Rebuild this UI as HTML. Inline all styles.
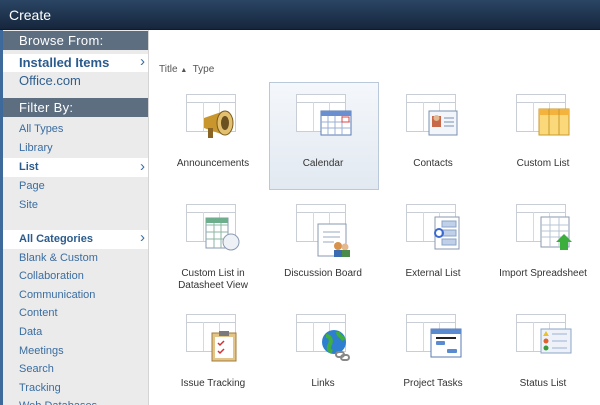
<!DOCTYPE html>
<html><head><meta charset="utf-8"><style>
*{margin:0;padding:0;box-sizing:border-box}
body{width:600px;height:405px;overflow:hidden;font-family:"Liberation Sans","DejaVu Sans",sans-serif;background:#fff;position:relative}
#top{position:absolute;left:0;top:0;width:600px;height:30px;background:linear-gradient(#2a4564,#16263c);color:#fff;font-size:14px;line-height:30px;padding-left:9px;border-bottom:1px solid #0f1b2b}
#side{position:absolute;left:0;top:30px;width:149px;height:375px;overflow:hidden;background:#ebebeb;border-left:3px solid #3d6a9a;border-right:1px solid #d4d4d4}
.h{height:19px;background:#5d6e80;color:#fff;font-size:13px;line-height:19px;padding-left:16px;letter-spacing:.3px}
.i{height:19px;font-size:11px;color:#3a6da1;line-height:19px;padding-left:16px;position:relative}
.c .i{height:18.6px;line-height:18.6px}
.sel{background:#fff;font-weight:bold;color:#2b5b8c}
.sel:after{content:"›";position:absolute;right:3px;top:-1px;font-size:15px;font-weight:normal;color:#3a6da1}
.big{font-size:13px;height:18px;line-height:18px}
.t{position:absolute;width:110px;text-align:center;font-size:10px;color:#333}
.f{position:absolute;width:50px;height:38px;border:1px solid #c9ced6;background:#fff}
.f:before{content:"";position:absolute;left:0;right:0;top:7px;border-top:1px solid #c9ced6}
.f i{position:absolute;top:7px;bottom:0;border-left:1px solid #d6dae0}
.o{position:absolute}
</style></head><body>
<div id="top">Create</div>
<div id="side">
<div class="h" style="margin-top:1px">Browse From:</div>
<div style="height:4px"></div>
<div class="i sel big">Installed Items</div>
<div class="i big" style="color:#2f5f8f">Office.com</div>
<div style="height:8px"></div>
<div class="h">Filter By:</div>
<div style="height:3px"></div>
<div class="i">All Types</div>
<div class="i">Library</div>
<div class="i sel">List</div>
<div class="i">Page</div>
<div class="i">Site</div>
<div style="height:15px"></div>
<div class="c">
<div class="i sel">All Categories</div>
<div class="i">Blank &amp; Custom</div>
<div class="i">Collaboration</div>
<div class="i">Communication</div>
<div class="i">Content</div>
<div class="i">Data</div>
<div class="i">Meetings</div>
<div class="i">Search</div>
<div class="i">Tracking</div>
<div class="i">Web Databases</div>
</div>
</div>
<div style="position:absolute;left:159px;top:64px;font-size:10px;color:#555">Title <span style="font-size:7px">▲</span>&nbsp; Type</div>
<div style="position:absolute;left:269px;top:82px;width:110px;height:108px;background:linear-gradient(#f4f7fb,#e2e9f1);border:1px solid #b9c9da"></div>

<div class="f" style="left:186px;top:94px"><i style="left:16px"></i><i style="left:32px"></i></div>
<div class="f" style="left:296px;top:94px"><i style="left:16px"></i><i style="left:32px"></i></div>
<div class="f" style="left:406px;top:94px"><i style="left:16px"></i><i style="left:32px"></i></div>
<div class="f" style="left:516px;top:94px"><i style="left:16px"></i><i style="left:32px"></i></div>
<div class="f" style="left:186px;top:204px"><i style="left:16px"></i><i style="left:32px"></i></div>
<div class="f" style="left:296px;top:204px"><i style="left:16px"></i><i style="left:32px"></i></div>
<div class="f" style="left:406px;top:204px"><i style="left:16px"></i><i style="left:32px"></i></div>
<div class="f" style="left:516px;top:204px"><i style="left:16px"></i><i style="left:32px"></i></div>
<div class="f" style="left:186px;top:314px"><i style="left:16px"></i><i style="left:32px"></i></div>
<div class="f" style="left:296px;top:314px"><i style="left:16px"></i><i style="left:32px"></i></div>
<div class="f" style="left:406px;top:314px"><i style="left:16px"></i><i style="left:32px"></i></div>
<div class="f" style="left:516px;top:314px"><i style="left:16px"></i><i style="left:32px"></i></div>

<svg class="o" style="left:200px;top:108px" width="42" height="32"><path d="M4 10 L24 3 L24 27 L4 20Z" fill="#c9962e"/><ellipse cx="25" cy="15" rx="8" ry="12" fill="#e2c070" stroke="#7a5a1e"/><ellipse cx="25" cy="15" rx="4" ry="7" fill="#6b5020"/><rect x="8" y="20" width="5" height="10" fill="#8a6422"/></svg>
<svg class="o" style="left:320px;top:110px" width="32" height="26"><rect x="1" y="1" width="30" height="24" fill="#fff" stroke="#5a7bb5"/><rect x="1" y="1" width="30" height="5" fill="#6a8fd0"/><path d="M1 12H31M1 18H31M8 6V25M15 6V25M22 6V25" stroke="#9ab0d5" stroke-width="1"/><rect x="22" y="7" width="7" height="5" fill="none" stroke="#d44"/></svg>
<svg class="o" style="left:428px;top:110px" width="30" height="26"><rect x="1" y="1" width="28" height="24" fill="#f2f5fa" stroke="#7a8fb0"/><rect x="4" y="6" width="9" height="11" fill="#c8684a"/><circle cx="8.5" cy="8" r="3" fill="#e4b890"/><path d="M16 8H26M16 12H26M16 16H26" stroke="#7a8fb0"/></svg>
<svg class="o" style="left:538px;top:108px" width="32" height="28"><rect x="1" y="1" width="30" height="26" fill="#fbd87a" stroke="#c79a30"/><rect x="1" y="1" width="30" height="6" fill="#f3b33c"/><path d="M11 1V27M21 1V27" stroke="#c79a30"/></svg>
<svg class="o" style="left:200px;top:212px" width="44" height="40"><rect x="6" y="6" width="22" height="30" fill="#fff" stroke="#8a9ab0"/><path d="M6 13H28M6 20H28M6 27H28M14 6V36M21 6V36" stroke="#8bb6a0"/><rect x="6" y="6" width="22" height="5" fill="#6fae8c"/><circle cx="31" cy="30" r="8" fill="#eef2f7" stroke="#8a9ab0"/></svg>
<svg class="o" style="left:314px;top:220px" width="40" height="40"><rect x="4" y="4" width="28" height="32" fill="#fff" stroke="#8a9ab0"/><path d="M9 12H26M9 17H26M9 22H20" stroke="#9aa8bf"/><circle cx="24" cy="26" r="4" fill="#d9924a"/><rect x="20" y="30" width="9" height="7" fill="#3a6ab0"/><circle cx="31" cy="27" r="3.5" fill="#e4b890"/><rect x="28" y="30" width="8" height="7" fill="#4a8a4a"/></svg>
<svg class="o" style="left:434px;top:216px" width="26" height="34"><rect x="1" y="1" width="24" height="32" fill="#fff" stroke="#8a9ab0"/><rect x="8" y="5" width="14" height="6" fill="#c0d0e8" stroke="#8aa4c8"/><rect x="8" y="14" width="14" height="6" fill="#c0d0e8" stroke="#8aa4c8"/><rect x="8" y="23" width="14" height="6" fill="#c0d0e8" stroke="#8aa4c8"/><circle cx="5" cy="17" r="4" fill="none" stroke="#3a6ad0" stroke-width="2"/></svg>
<svg class="o" style="left:538px;top:216px" width="34" height="36"><rect x="3" y="1" width="28" height="30" fill="#fff" stroke="#8a9ab0"/><path d="M3 9H31M3 15H31M3 21H31M12 1V31M21 1V31" stroke="#b9c4d4"/><path d="M18 26 L26 18 L34 26 L30 26 L30 34 L22 34 L22 26Z" fill="#3cae3c"/></svg>
<svg class="o" style="left:210px;top:330px" width="30" height="32"><rect x="2" y="3" width="24" height="28" fill="#e3c58a" stroke="#a07c3a"/><rect x="5" y="7" width="18" height="21" fill="#fff"/><rect x="9" y="1" width="10" height="5" fill="#7a7a7a"/><path d="M8 13l2 2 4-4M8 21l2 2 4-4" stroke="#c33" stroke-width="1.5" fill="none"/></svg>
<svg class="o" style="left:320px;top:328px" width="32" height="34"><circle cx="14" cy="14" r="12" fill="#2f7fd0"/><path d="M6 8c4 0 6 4 4 8s-2 6 2 8M18 4c0 4 4 4 6 8" stroke="#3fae3f" stroke-width="4" fill="none"/><rect x="16" y="24" width="8" height="5" rx="2.5" fill="none" stroke="#888" stroke-width="2"/><rect x="21" y="27" width="8" height="5" rx="2.5" fill="none" stroke="#888" stroke-width="2"/></svg>
<svg class="o" style="left:430px;top:328px" width="32" height="32"><rect x="1" y="1" width="30" height="28" fill="#fff" stroke="#5a7bb5"/><rect x="1" y="1" width="30" height="5" fill="#5a8ad0"/><path d="M6 10H26" stroke="#222" stroke-width="2"/><rect x="6" y="13" width="9" height="4" rx="1" fill="#5a8ad0"/><rect x="17" y="21" width="10" height="4" rx="1" fill="#5a8ad0"/></svg>
<svg class="o" style="left:540px;top:328px" width="32" height="26"><rect x="1" y="1" width="30" height="24" fill="#eef2f8" stroke="#8aa4c8"/><path d="M6 3l3 5h-6z" fill="#e8c030"/><circle cx="6" cy="13" r="2.5" fill="#e06030"/><circle cx="6" cy="20" r="2.5" fill="#3a9a3a"/><path d="M12 6H27M12 13H27M12 20H27" stroke="#9ab0d5"/></svg>

<div class="t" style="left:158px;top:158px">Announcements</div>
<div class="t" style="left:268px;top:158px">Calendar</div>
<div class="t" style="left:378px;top:158px">Contacts</div>
<div class="t" style="left:488px;top:158px">Custom List</div>
<div class="t" style="left:158px;top:268px;line-height:12px">Custom List in<br>Datasheet View</div>
<div class="t" style="left:268px;top:268px">Discussion Board</div>
<div class="t" style="left:378px;top:268px">External List</div>
<div class="t" style="left:488px;top:268px">Import Spreadsheet</div>
<div class="t" style="left:158px;top:378px">Issue Tracking</div>
<div class="t" style="left:268px;top:378px">Links</div>
<div class="t" style="left:378px;top:378px">Project Tasks</div>
<div class="t" style="left:488px;top:378px">Status List</div>
</body></html>
